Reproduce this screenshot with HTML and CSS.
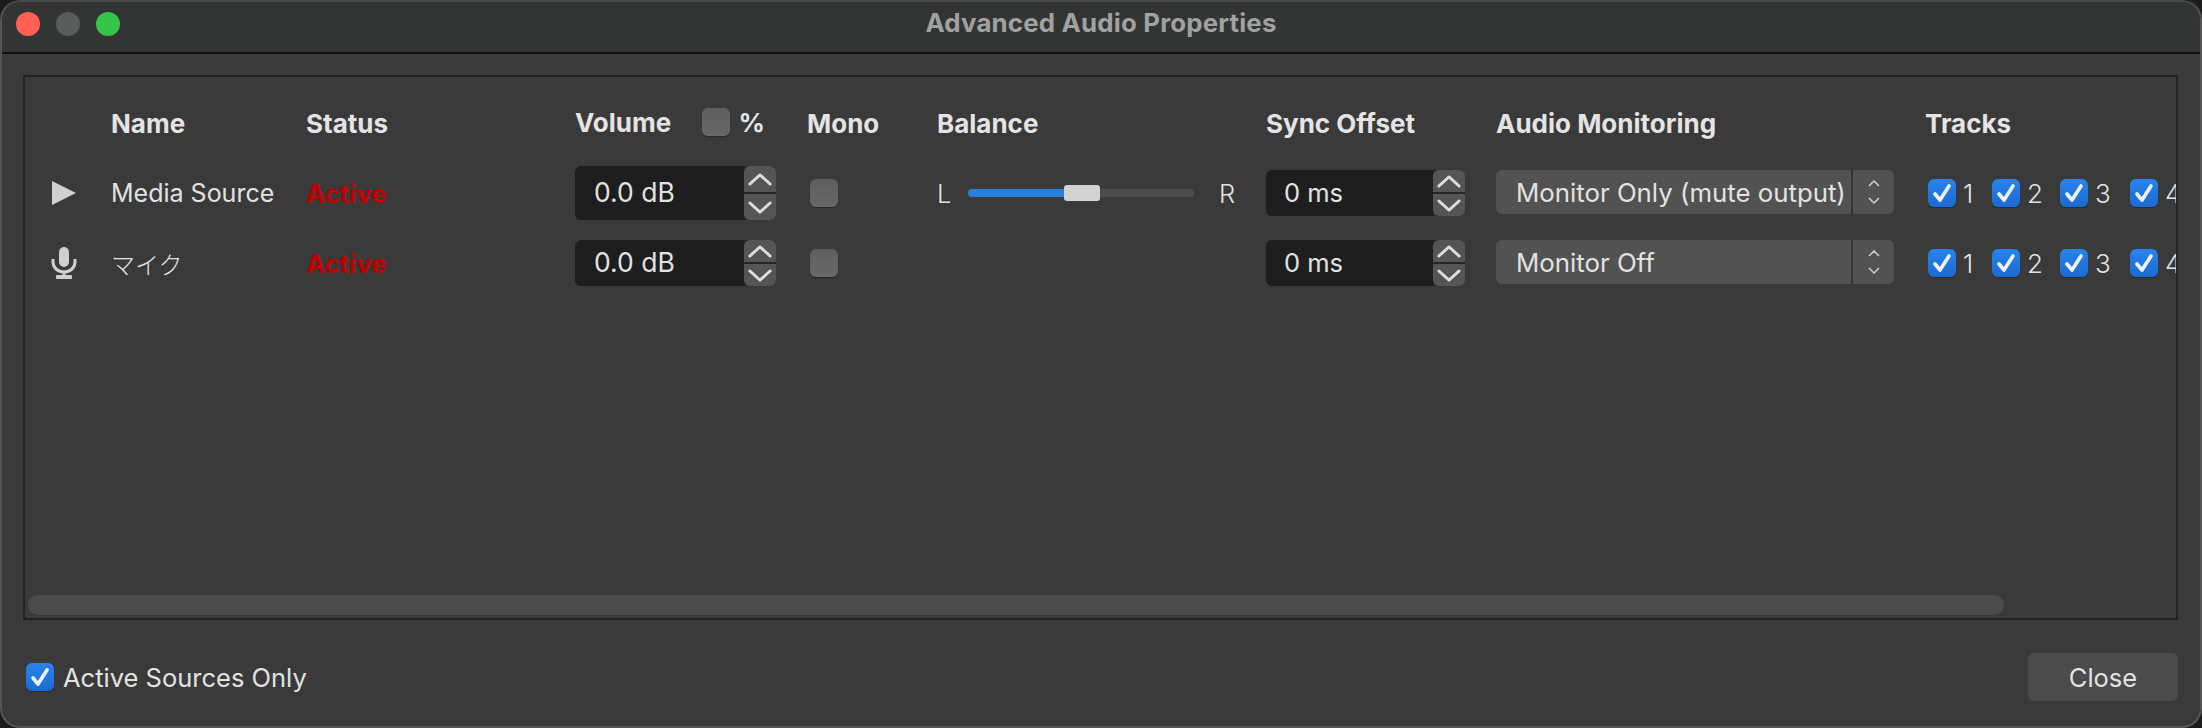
FILE: index.html
```html
<!DOCTYPE html>
<html lang="en">
<head>
    <meta charset="UTF-8">
    <title>Advanced Audio Properties</title>
    <link rel="stylesheet" href="styles.css">
</head>
<body>
    <div class="window">
        <div class="titlebar">
            <div class="lights">
                <span class="light red"></span>
                <span class="light gray"></span>
                <span class="light green"></span>
            </div>
            <div class="title">Advanced Audio Properties</div>
        </div>
        <div class="content">
            <div class="panel">
                <div class="table">
                    <!-- header -->
                    <div></div>
                    <div class="head">Name</div>
                    <div class="head">Status</div>
                    <div class="head volume-head"><span class="volume-label">Volume</span><span class="check"></span><span>%</span></div>
                    <div class="head">Mono</div>
                    <div class="head">Balance</div>
                    <div class="head">Sync Offset</div>
                    <div class="head">Audio Monitoring</div>
                    <div class="head">Tracks</div>

                    <!-- media source -->
                    <div class="icon-cell">
                        <svg width="26" height="24" viewBox="0 0 26 24"><path d="M1 0 L25 12 L1 24 Z" fill="#d0d0d0"/></svg>
                    </div>
                    <div class="name">Media Source</div>
                    <div class="status">Active</div>
                    <div class="spin spin-volume spin-tall">
                        <div class="spin-value">0.0 dB</div>
                        <div class="stepper">
                            <span class="step"><svg viewBox="0 0 28 16"><path d="M3 13 L14 3 L25 13"/></svg></span>
                            <span class="step"><svg viewBox="0 0 28 16"><path d="M3 3 L14 13 L25 3"/></svg></span>
                        </div>
                    </div>
                    <div class="mono-cell"><span class="check"></span></div>
                    <div class="balance">
                        <span class="balance-l">L</span>
                        <div class="slider">
                            <div class="slider-fill"></div>
                            <div class="slider-thumb"></div>
                        </div>
                        <span class="balance-r">R</span>
                    </div>
                    <div class="spin spin-sync">
                        <div class="spin-value">0 ms</div>
                        <div class="stepper">
                            <span class="step"><svg viewBox="0 0 28 16"><path d="M3 13 L14 3 L25 13"/></svg></span>
                            <span class="step"><svg viewBox="0 0 28 16"><path d="M3 3 L14 13 L25 3"/></svg></span>
                        </div>
                    </div>
                    <div class="combo combo-first">
                        <div class="combo-value">Monitor Only (mute output)</div>
                        <div class="combo-arrows">
                            <svg width="14" height="26" viewBox="0 0 14 26"><path d="M2 7 L7 2 L12 7 M2 19 L7 24 L12 19"/></svg>
                        </div>
                    </div>
                    <div class="tracks">
                        <label class="track track-1"><span class="check on"><svg viewBox="0 0 28 28"><path d="M7 15 L12 21 L21 7"/></svg></span>1</label>
                        <label class="track track-2"><span class="check on"><svg viewBox="0 0 28 28"><path d="M7 15 L12 21 L21 7"/></svg></span>2</label>
                        <label class="track track-3"><span class="check on"><svg viewBox="0 0 28 28"><path d="M7 15 L12 21 L21 7"/></svg></span>3</label>
                        <label class="track"><span class="check on"><svg viewBox="0 0 28 28"><path d="M7 15 L12 21 L21 7"/></svg></span>4</label>
                    </div>

                    <!-- mic -->
                    <div class="icon-cell">
                        <svg width="26" height="32" viewBox="0 0 26 32">
                            <rect x="8" y="0" width="10" height="20" rx="5" fill="#d0d0d0"/>
                            <path d="M2 12 V15 C2 21 7 25 13 25 C19 25 24 21 24 15 V12" fill="none" stroke="#d0d0d0" stroke-width="3"/>
                            <rect x="11.5" y="24" width="3" height="5" fill="#d0d0d0"/>
                            <rect x="5" y="28" width="16" height="4" rx="1" fill="#d0d0d0"/>
                        </svg>
                    </div>
                    <div class="name name-jp">マイク</div>
                    <div class="status">Active</div>
                    <div class="spin spin-volume">
                        <div class="spin-value">0.0 dB</div>
                        <div class="stepper">
                            <span class="step"><svg viewBox="0 0 28 16"><path d="M3 13 L14 3 L25 13"/></svg></span>
                            <span class="step"><svg viewBox="0 0 28 16"><path d="M3 3 L14 13 L25 3"/></svg></span>
                        </div>
                    </div>
                    <div class="mono-cell"><span class="check"></span></div>
                    <div></div>
                    <div class="spin spin-sync">
                        <div class="spin-value">0 ms</div>
                        <div class="stepper">
                            <span class="step"><svg viewBox="0 0 28 16"><path d="M3 13 L14 3 L25 13"/></svg></span>
                            <span class="step"><svg viewBox="0 0 28 16"><path d="M3 3 L14 13 L25 3"/></svg></span>
                        </div>
                    </div>
                    <div class="combo">
                        <div class="combo-value">Monitor Off</div>
                        <div class="combo-arrows">
                            <svg width="14" height="26" viewBox="0 0 14 26"><path d="M2 7 L7 2 L12 7 M2 19 L7 24 L12 19"/></svg>
                        </div>
                    </div>
                    <div class="tracks">
                        <label class="track track-1"><span class="check on"><svg viewBox="0 0 28 28"><path d="M7 15 L12 21 L21 7"/></svg></span>1</label>
                        <label class="track track-2"><span class="check on"><svg viewBox="0 0 28 28"><path d="M7 15 L12 21 L21 7"/></svg></span>2</label>
                        <label class="track track-3"><span class="check on"><svg viewBox="0 0 28 28"><path d="M7 15 L12 21 L21 7"/></svg></span>3</label>
                        <label class="track"><span class="check on"><svg viewBox="0 0 28 28"><path d="M7 15 L12 21 L21 7"/></svg></span>4</label>
                    </div>
                </div>
                <div class="scrollbar"></div>
            </div>
            <div class="footer">
                <label class="active-only"><span class="check on"><svg viewBox="0 0 28 28"><path d="M7 15 L12 21 L21 7"/></svg></span>Active Sources Only</label>
                <button class="close-btn" type="button">Close</button>
            </div>
        </div>
    </div>
</body>
</html>
```

FILE: styles.css
```css
* {
    box-sizing: border-box;
}
html, body {
    margin: 0;
    height: 100%;
    background-color: #1c1c1c;
    overflow: hidden;
}
body {
    font-family: "Inter", "Noto Sans CJK JP", sans-serif;
    color: #e2e2e2;
}
.window {
    height: 728px;
    display: flex;
    flex-direction: column;
    background-color: #3a3a3a;
    border: 2px solid #555;
    border-top-color: #4a4a4a;
    border-radius: 20px;
    overflow: hidden;
}

/* title bar */
.titlebar {
    height: 52px;
    flex: none;
    display: flex;
    align-items: center;
    justify-content: center;
    position: relative;
    background-color: #333534;
    border-bottom: 2px solid #111;
}
.lights {
    position: absolute;
    left: 14px;
    top: 10px;
    display: flex;
    gap: 16px;
}
.light {
    width: 24px;
    height: 24px;
    border-radius: 50%;
}
.red { background-color: #ff5f57; }
.gray { background-color: #5a5c5b; }
.green { background-color: #35c649; }
.title {
    font-size: 25.8px;
    font-weight: 700;
    color: #a0a2a1;
    margin-top: -10px;
    letter-spacing: 0.2px;
}

/* main area */
.content {
    flex: 1;
    display: flex;
    flex-direction: column;
    padding: 21px 22px 0 21px;
}
.panel {
    height: 545px;
    flex: none;
    border: 2px solid #232323;
    overflow: hidden;
    display: flex;
    flex-direction: column;
    justify-content: space-between;
    padding-top: 23px;
}
.table {
    display: grid;
    grid-template-columns: 59px 195px 269px 232px 130px 329px 230px 429px 400px;
    grid-template-rows: 46px 54px 46px;
    row-gap: 20px;
    padding-left: 27px;
    align-items: center;
}
.head {
    font-size: 26px;
    font-weight: 700;
    color: #e4e4e4;
}
.volume-head {
    display: flex;
    align-items: center;
    width: 190px;
    margin-top: -2px;
}
.volume-label {
    width: 130px;
}
.volume-head .check {
    margin-right: 9px;
}
.icon-cell {
    display: flex;
    align-items: center;
    margin-left: -1px;
}
.name {
    font-size: 25px;
    color: #e2e2e2;
}
.name-jp {
    font-size: 24px;
    font-weight: 300;
}
.status {
    font-size: 25.8px;
    font-weight: 700;
    color: #c00000;
}

/* spin boxes */
.spin {
    height: 46px;
    width: 201px;
    display: flex;
    font-size: 25.5px;
}
.spin-volume {
    font-size: 26.5px;
}
.spin-tall {
    height: 54px;
}
.spin-sync {
    width: 199px;
}
.spin-value {
    flex: 1;
    display: flex;
    align-items: center;
    padding: 0 0 2px 18px;
    background-color: #1e1e1e;
    border-radius: 6px 0 0 6px;
}
.spin-volume .spin-value {
    padding-left: 19px;
}
.stepper {
    width: 32px;
    flex: none;
    display: flex;
    flex-direction: column;
    gap: 2px;
    background-color: #262626;
    border-radius: 0 6px 6px 0;
}
.step {
    flex: 1;
    display: flex;
    align-items: center;
    justify-content: center;
    background-color: #555;
}
.step:first-child {
    border-radius: 6px 6px 0 0;
}
.step:last-child {
    border-radius: 0 0 6px 6px;
}
.step svg {
    width: 26px;
    height: 15px;
}
.step path {
    fill: none;
    stroke: #dcdcdc;
    stroke-width: 3;
    stroke-linecap: round;
    stroke-linejoin: round;
}

/* check boxes */
.check {
    display: inline-block;
    flex: none;
    width: 28px;
    height: 28px;
    border-radius: 6px;
    background: linear-gradient(#5e5e5e, #686868);
    box-shadow: 0 1px 1px rgba(0, 0, 0, 0.3);
}
.check.on {
    background: linear-gradient(#2a83ec, #1a6ad2);
}
.check svg {
    display: block;
}
.check path {
    fill: none;
    stroke: #eef3fb;
    stroke-width: 3.6;
    stroke-linecap: round;
    stroke-linejoin: round;
}
.mono-cell {
    padding-left: 3px;
    display: flex;
}

/* balance */
.balance {
    display: flex;
    align-items: center;
    font-size: 25.5px;
    font-weight: 300;
}
.balance-l {
    width: 31px;
}
.slider {
    width: 226px;
    height: 8px;
    border-radius: 4px;
    background-color: #4c4c4c;
    position: relative;
}
.slider-fill {
    width: 96px;
    height: 8px;
    border-radius: 4px 0 0 4px;
    background-color: #2a7fdc;
}
.slider-thumb {
    position: absolute;
    left: 96px;
    top: -4px;
    width: 36px;
    height: 16px;
    border-radius: 3px;
    background-color: #d2d2d2;
}
.balance-r {
    margin-left: 25px;
}

/* combo */
.combo {
    width: 398px;
    height: 44px;
    align-self: start;
    display: flex;
    font-size: 25.8px;
    background-color: #525252;
    border-radius: 6px;
    overflow: hidden;
}
.combo-first {
    margin-top: 4px;
}
.combo-value {
    width: 357px;
    display: flex;
    align-items: center;
    padding-left: 20px;
    white-space: nowrap;
    border-right: 2px solid #363636;
}
.combo-arrows {
    flex: 1;
    display: flex;
    align-items: center;
    justify-content: center;
}
.combo-arrows path {
    fill: none;
    stroke: #cfcfcf;
    stroke-width: 1.5;
}

/* tracks */
.tracks {
    display: flex;
    align-items: center;
    padding-left: 3px;
    font-size: 26px;
    font-weight: 300;
}
.track {
    display: flex;
    align-items: center;
    gap: 7px;
}
.track-1 {
    width: 64px;
}
.track-2 {
    width: 68px;
}
.track-3 {
    width: 70px;
}

/* scroll bar */
.scrollbar {
    height: 20px;
    width: 1976px;
    margin: 0 0 3px 3px;
    border-radius: 10px;
    background-color: #4c4c4c;
}

/* footer */
.footer {
    display: flex;
    align-items: center;
    justify-content: space-between;
    height: 48px;
    margin-top: 33px;
    padding-left: 3px;
}
.active-only {
    display: flex;
    align-items: center;
    gap: 9px;
    font-size: 25.5px;
}
.close-btn {
    width: 150px;
    height: 48px;
    border: none;
    border-radius: 6px;
    background-color: #4b4b4b;
    color: #e2e2e2;
    font-family: inherit;
    font-size: 25.5px;
}
```
